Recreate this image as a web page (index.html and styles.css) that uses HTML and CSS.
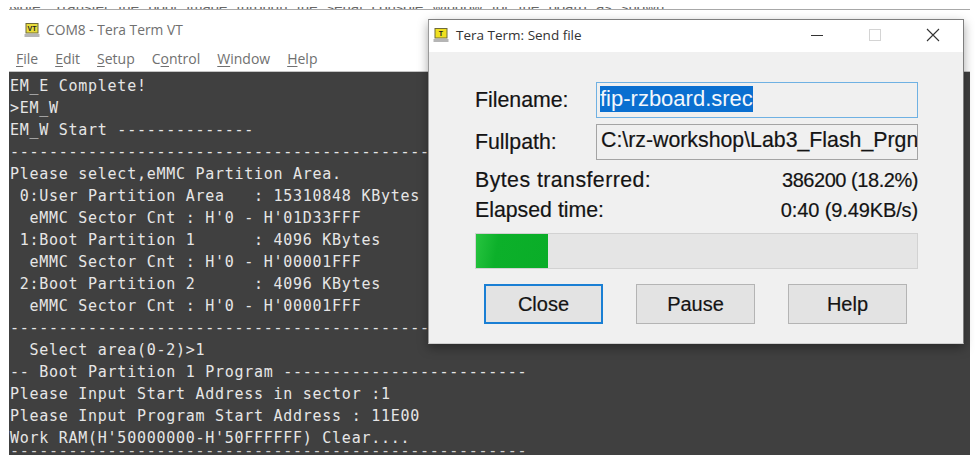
FILE: index.html
```html
<!DOCTYPE html>
<html lang="en">
<head>
<meta charset="utf-8">
<title>Tera Term</title>
<link rel="stylesheet" href="styles.css">
</head>
<body>
<div class="clip-line"><div class="clip-text">Note: Transfer the boot image through the serial console window for the board as shown</div></div>
<main class="term-window">
  <header class="term-title">
    <svg class="app-icon" viewBox="0 0 16 16" width="16" height="16" aria-hidden="true">
      <rect x="1.5" y="1" width="13" height="10.5" fill="#6f6a3a"/>
      <rect x="2.5" y="2" width="11" height="8.5" fill="#e8dc3c"/>
      <rect x="0.5" y="12" width="15" height="3" fill="#b5b5b5"/>
      <text x="8" y="8.6" class="icon-text">VT</text>
    </svg>
    <span>COM8 - Tera Term VT</span>
  </header>
  <nav class="term-menu">
    <span><u>F</u>ile</span>
    <span><u>E</u>dit</span>
    <span><u>S</u>etup</span>
    <span>C<u>o</u>ntrol</span>
    <span><u>W</u>indow</span>
    <span><u>H</u>elp</span>
  </nav>
  <pre class="term-screen">EM_E Complete!
&gt;EM_W
EM_W Start --------------
-----------------------------------------------------
Please select,eMMC Partition Area.
 0:User Partition Area   : 15310848 KBytes
  eMMC Sector Cnt : H'0 - H'01D33FFF
 1:Boot Partition 1      : 4096 KBytes
  eMMC Sector Cnt : H'0 - H'00001FFF
 2:Boot Partition 2      : 4096 KBytes
  eMMC Sector Cnt : H'0 - H'00001FFF
-----------------------------------------------------
  Select area(0-2)&gt;1
-- Boot Partition 1 Program -------------------------
Please Input Start Address in sector :1
Please Input Program Start Address : 11E00
Work RAM(H'50000000-H'50FFFFFF) Clear....
<span class="term-last">-----------------------------------------------------</span></pre>
</main>

<section class="dialog">
  <header class="dialog-title">
    <svg class="app-icon" viewBox="0 0 16 16" width="16" height="16" aria-hidden="true">
      <rect x="1.5" y="1" width="13" height="10.5" fill="#6f6a3a"/>
      <rect x="2.5" y="2" width="11" height="8.5" fill="#f0e020"/>
      <rect x="0.5" y="12" width="15" height="3" fill="#b5b5b5"/>
      <text x="8" y="8.8" class="icon-text">T</text>
    </svg>
    <span class="dialog-name">Tera Term: Send file</span>
    <svg class="win-btn" viewBox="0 0 12 12" width="12" height="12" aria-hidden="true"><path d="M0 6.5H12" stroke="#333" fill="none"/></svg>
    <svg class="win-btn win-max" viewBox="0 0 12 12" width="12" height="12" aria-hidden="true"><rect x="0.5" y="0.5" width="11" height="11" stroke="#d4d4d4" fill="none"/></svg>
    <svg class="win-btn win-close" viewBox="0 0 14 14" width="14" height="14" aria-hidden="true"><path d="M1 1L13 13M13 1L1 13" stroke="#333" stroke-width="1.1" fill="none"/></svg>
  </header>
  <div class="dialog-body">
    <div class="field">
      <span class="label">Filename:</span>
      <div class="input input-focus"><span class="selected">fip-rzboard.srec</span></div>
    </div>
    <div class="field">
      <span class="label">Fullpath:</span>
      <div class="input input-path">C:\rz-workshop\Lab3_Flash_Prgn</div>
    </div>
    <div class="stat stat-first"><span class="stat-name">Bytes transferred:</span><span class="stat-value">386200 (18.2%)</span></div>
    <div class="stat"><span>Elapsed time:</span><span class="stat-rate">0:40 (9.49KB/s)</span></div>
    <div class="progress"><div class="progress-fill" style="width: 16.3%"></div></div>
    <div class="buttons">
      <button class="btn btn-default" type="button">Close</button>
      <button class="btn" type="button">Pause</button>
      <button class="btn" type="button">Help</button>
    </div>
  </div>
</section>
</body>
</html>
```
FILE: styles.css
```css
* { box-sizing: border-box; }
html, body { margin: 0; padding: 0; }
body {
  width: 975px;
  height: 461px;
  background: #fff;
  position: relative;
  overflow: hidden;
  font-family: "Liberation Sans", Arial, sans-serif;
}
.clip-line {
  height: 9px;
  padding: 7px 0 0 9px;
}
.clip-text {
  height: 2px;
  overflow: hidden;
  line-height: 0;
  font-size: 15px;
  color: #666;
  white-space: nowrap;
  word-spacing: 5px;
}
.term-window {
  width: 961px;
  height: 446px;
  margin-left: 9px;
  border-top: 1px solid #a8a8a8;
  display: flex;
  flex-direction: column;
  overflow: hidden;
}
.term-title {
  height: 37px;
  flex: none;
  display: flex;
  align-items: center;
  gap: 6px;
  padding: 3px 0 0 15px;
  font: 13.8px/20px "Open Sans", "Liberation Sans", sans-serif;
  color: #707070;
}
.app-icon { flex: none; }
.icon-text {
  font: bold 7px "Liberation Sans", sans-serif;
  fill: #222;
  text-anchor: middle;
}
.term-menu {
  height: 25px;
  flex: none;
  display: flex;
  align-items: center;
  gap: 17px;
  padding: 0 0 0 7px;
  font: 14px/20px "Open Sans", "Liberation Sans", sans-serif;
  color: #707070;
  border-bottom: 1px solid #c4c4c4;
}
.term-menu u { text-underline-offset: 2px; text-decoration-thickness: 1px; }
.term-screen {
  flex: 1;
  margin: 0;
  padding: 3px 0 0 1px;
  background: #404040;
  color: #e6e6e6;
  font-family: "DejaVu Sans Mono", "Liberation Mono", monospace;
  font-size: 15px;
  letter-spacing: 0.73px;
  line-height: 22px;
  overflow: hidden;
  white-space: pre;
}
.term-last {
  display: block;
  margin-top: -9px;
  color: #cfcfcf;
}
.dialog {
  position: absolute;
  left: 428px;
  top: 19px;
  width: 536px;
  height: 325px;
  background: #f0f0f0;
  border: 1px solid #7e7e7e;
  border-bottom-color: #cfcfcf;
  border-left-color: #9a9a9a;
  box-shadow: 0 4px 10px rgba(0, 0, 0, 0.35);
  display: flex;
  flex-direction: column;
}
.dialog-title {
  height: 32px;
  flex: none;
  background: #fff;
  display: flex;
  align-items: center;
  padding: 0 23px 2px 4px;
  font: 13.5px/20px "Open Sans", "Liberation Sans", sans-serif;
  color: #333;
}
.dialog-name { flex: 1; margin-left: 7px; }
.win-btn { flex: none; }
.win-max { margin-left: 46px; }
.win-close { margin-left: 45px; }
.dialog-body {
  flex: 1;
  padding: 30px 45px 0 46px;
  display: flex;
  flex-direction: column;
  font-size: 21.3px;
  color: #141414;
  -webkit-text-stroke: 0.2px #141414;
}
.field {
  display: flex;
  align-items: center;
  height: 36px;
  margin-bottom: 6px;
}
.label { width: 121px; flex: none; }
.input {
  flex: 1;
  height: 36px;
  display: flex;
  align-items: center;
  padding-left: 3px;
  white-space: nowrap;
  overflow: hidden;
}
.input-focus { border: 1px solid #6fb1e3; padding-bottom: 3px; font-size: 22px; }
.input-path { border: 1px solid #a4a4a4; padding-left: 4px; padding-bottom: 4px; }
.selected { background: #0a6fd0; color: #f2f7fc; -webkit-text-stroke: 0; }
.stat {
  display: flex;
  justify-content: space-between;
  height: 30px;
  line-height: 26px;
}
.stat-first { margin-top: 1px; }
.stat-name { letter-spacing: 0.45px; }
.stat-value { font-size: 20px; letter-spacing: -0.45px; }
.stat-rate { font-size: 20px; letter-spacing: -0.12px; }
.progress {
  height: 36px;
  margin-top: 6px;
  background: #e5e5e5;
  border: 1px solid #d2d2d2;
}
.progress-fill {
  height: 100%;
  background: linear-gradient(100deg, #27c43f 0, #0cb02a 30%, #0aad28 100%);
}
.buttons {
  display: flex;
  gap: 33px;
  margin: 15px 0 0 9px;
}
.btn {
  width: 119px;
  height: 40px;
  padding: 0;
  background: #e3e3e3;
  border: 1px solid #b4b4b4;
  font: 20px "Liberation Sans", sans-serif;
  color: #141414;
  -webkit-text-stroke: 0.2px #141414;
}
.btn-default { border: 2px solid #1a7fd4; }
```
